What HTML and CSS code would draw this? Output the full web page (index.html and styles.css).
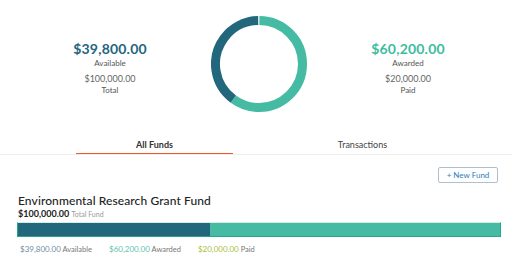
FILE: index.html
```html
<!DOCTYPE html>
<html lang="en">
<head>
  <meta charset="UTF-8">
  <meta name="viewport" content="width=device-width, initial-scale=1.0">
  <title>Funds</title>
  <link rel="stylesheet" href="styles.css">
</head>
<body>

  <div class="summary">
    <div class="stat">
      <div class="stat-main available">$39,800.00</div>
      <div class="stat-label">Available</div>
      <div class="stat-sub">$100,000.00</div>
      <div class="stat-label">Total</div>
    </div>

    <svg class="donut" width="96" height="96" viewBox="0 0 96 96">
      <!-- circumference for r=43.5 is ~273.3 -->
      <circle cx="48" cy="48" r="43.5" fill="none" stroke="#46bba3" stroke-width="9"
        stroke-dasharray="163.5 273.3" transform="rotate(-89.5 48 48)"></circle>
      <circle cx="48" cy="48" r="43.5" fill="none" stroke="#23677c" stroke-width="9"
        stroke-dasharray="108.2 273.3" transform="rotate(126.2 48 48)"></circle>
    </svg>

    <div class="stat">
      <div class="stat-main awarded">$60,200.00</div>
      <div class="stat-label">Awarded</div>
      <div class="stat-sub">$20,000.00</div>
      <div class="stat-label">Paid</div>
    </div>
  </div>

  <div class="tabs">
    <div class="tab active">All Funds</div>
    <div class="tab">Transactions</div>
  </div>

  <div class="toolbar">
    <button class="new-fund">+ New Fund</button>
  </div>

  <div class="fund">
    <h2 class="fund-name">Environmental Research Grant Fund</h2>
    <div class="fund-total"><b>$100,000.00</b> <span>Total Fund</span></div>
    <div class="fund-bar">
      <div class="bar-available" style="width: 39.8%"></div>
      <div class="bar-awarded"></div>
    </div>
    <div class="legend">
      <span><em class="c-available">$39,800.00</em> Available</span>
      <span><em class="c-awarded">$60,200.00</em> Awarded</span>
      <span><em class="c-paid">$20,000.00</em> Paid</span>
    </div>
  </div>

</body>
</html>
```

FILE: styles.css
```css
body {
  font-family: Lato, "Open Sans", sans-serif;
  margin: 0;
  padding: 0;
  background-color: #fff;
  color: #333;
}
.summary {
  display: grid;
  grid-template-columns: 202px 96px 202px;
  justify-content: start;
  padding: 16px 0 0 9px;
  height: 112px;
  box-sizing: border-box;
}
.stat {
  text-align: center;
  padding-top: 24px;
}
.stat-main {
  font-size: 14px;
  font-weight: 700;
  line-height: 18px;
  letter-spacing: 0.2px;
}
.stat-main.available {
  color: #1f6680;
}
.stat-main.awarded {
  color: #3dbc9f;
}
.stat-label {
  font-size: 8px;
  color: #555;
  line-height: 10px;
}
.stat-sub {
  font-size: 9px;
  color: #666;
  margin-top: 5px;
  line-height: 12px;
}
.donut {
  display: block;
}
.tabs {
  display: flex;
  gap: 52px;
  padding-left: 76px;
  margin-top: 27px;
  border-bottom: 1px solid #ececec;
}
.tab {
  width: 157px;
  text-align: center;
  font-size: 9px;
  line-height: 11px;
  color: #444;
  padding-bottom: 3px;
  border-bottom: 1px solid transparent;
}
.tab:nth-child(2) {
  width: 155px;
}
.tab.active {
  font-weight: 700;
  color: #333;
  border-bottom-color: #f05a28;
}
.toolbar {
  display: flex;
  justify-content: flex-end;
  padding: 12px 14px 0 0;
}
.new-fund {
  font-family: inherit;
  font-size: 8px;
  color: #2f7db6;
  background: #fff;
  border: 1px solid #aebfd0;
  border-radius: 2px;
  width: 60px;
  height: 16px;
  padding: 0;
}
.fund {
  padding: 0 11px 0 17px;
}
.fund-name {
  font-size: 12px;
  font-weight: 500;
  color: #222;
  margin: 11px 0 0 1px;
  line-height: 14px;
  letter-spacing: 0.1px;
}
.fund-total {
  font-size: 9px;
  color: #222;
  margin: 1px 0 0 1px;
  line-height: 10px;
}
.fund-total span {
  font-size: 7px;
  color: #999;
}
.fund-bar {
  display: flex;
  height: 15px;
  margin-top: 3px;
  border: 1px solid #2aa58c;
  border-top-color: #d6ece7;
  box-sizing: border-box;
}
.bar-available {
  background-color: #23677c;
}
.bar-awarded {
  flex: 1;
  background-color: #46bba3;
}
.legend {
  display: flex;
  gap: 17px;
  padding-left: 3px;
  margin-top: 7px;
  font-size: 7.5px;
  line-height: 10px;
  color: #777;
}
.legend em {
  font-style: normal;
  font-size: 8px;
}
.c-available {
  color: #6f8ea2;
}
.c-awarded {
  color: #5fc3ad;
}
.c-paid {
  color: #a8c23c;
}
```
